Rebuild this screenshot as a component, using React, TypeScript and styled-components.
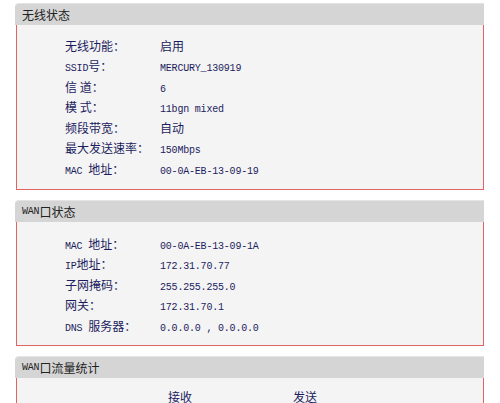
import React from "react";
import styled, { createGlobalStyle } from "styled-components";

const GlobalStyle = createGlobalStyle`
  html, body {
    margin: 0;
    padding: 0;
    background: #ffffff;
  }
  body {
    font-family: "Noto Sans CJK SC", "Liberation Sans", sans-serif;
    font-size: 12px;
  }
`;

const Page = styled.div`
  width: 500px;
  height: 403px;
  overflow: hidden;
  padding: 3px 16px 0 15px;
  box-sizing: border-box;
  display: flex;
  flex-direction: column;
  gap: 10px;
`;

const Section = styled.section`
  display: flex;
  flex-direction: column;
`;

const Header = styled.div`
  height: 22px;
  display: flex;
  align-items: center;
  padding-left: 7px;
  background: #d5d5d5;
  border-top: 1px solid #e4e4e4;
  box-sizing: border-box;
  border-radius: 4px 0 0 0;
  color: #222222;
  font-size: 12px;
  line-height: 12px;
`;

const Box = styled.div<{ $top: number; $bottom: number }>`
  margin-left: 1px;
  background: #f4f4f4;
  border: 1px solid #e06464;
  border-top: none;
  padding: ${(p) => p.$top}px 0 ${(p) => p.$bottom}px 48px;
  display: flex;
  flex-direction: column;
`;

const Row = styled.div`
  height: 20.5px;
  display: grid;
  grid-template-columns: 95px 1fr;
  align-items: center;
  color: #1c1c5e;
`;

const Label = styled.span`
  white-space: pre;
`;

const Value = styled.span`
  white-space: pre;
`;

const Latin = styled.span`
  font-family: "Liberation Mono", monospace;
  font-size: 10px;
  letter-spacing: -0.2px;
`;

const StatsHead = styled.div`
  display: grid;
  grid-template-columns: 103px 125px 1fr;
  height: 16px;
  line-height: 16px;
  align-items: center;
  color: #1c1c5e;
`;

type Item = { label: React.ReactNode; value: React.ReactNode };

const wireless: Item[] = [
  { label: "无线功能：", value: "启用" },
  { label: <><Latin>SSID</Latin>号：</>, value: <Latin>MERCURY_130919</Latin> },
  { label: "信 道：", value: <Latin>6</Latin> },
  { label: "模 式：", value: <Latin>11bgn mixed</Latin> },
  { label: "频段带宽：", value: "自动" },
  { label: "最大发送速率：", value: <Latin>150Mbps</Latin> },
  { label: <><Latin>MAC </Latin>地址：</>, value: <Latin>00-0A-EB-13-09-19</Latin> },
];

const wan: Item[] = [
  { label: <><Latin>MAC </Latin>地址：</>, value: <Latin>00-0A-EB-13-09-1A</Latin> },
  { label: <><Latin>IP</Latin>地址：</>, value: <Latin>172.31.70.77</Latin> },
  { label: "子网掩码：", value: <Latin>255.255.255.0</Latin> },
  { label: "网关：", value: <Latin>172.31.70.1</Latin> },
  { label: <><Latin>DNS </Latin>服务器：</>, value: <Latin>0.0.0.0 , 0.0.0.0</Latin> },
];

const Rows: React.FC<{ items: Item[] }> = ({ items }) => (
  <>
    {items.map((it, i) => (
      <Row key={i}>
        <Label>{it.label}</Label>
        <Value>{it.value}</Value>
      </Row>
    ))}
  </>
);

const App: React.FC = () => (
  <>
    <GlobalStyle />
    <Page>
      <Section>
        <Header>无线状态</Header>
        <Box $top={10} $bottom={10.5}>
          <Rows items={wireless} />
        </Box>
      </Section>
      <Section>
        <Header><Latin>WAN</Latin>口状态</Header>
        <Box $top={11} $bottom={9.5}>
          <Rows items={wan} />
        </Box>
      </Section>
      <Section>
        <Header><Latin>WAN</Latin>口流量统计</Header>
        <Box $top={11} $bottom={10}>
          <StatsHead>
            <span />
            <span>接收</span>
            <span>发送</span>
          </StatsHead>
        </Box>
      </Section>
    </Page>
  </>
);

export default App;
